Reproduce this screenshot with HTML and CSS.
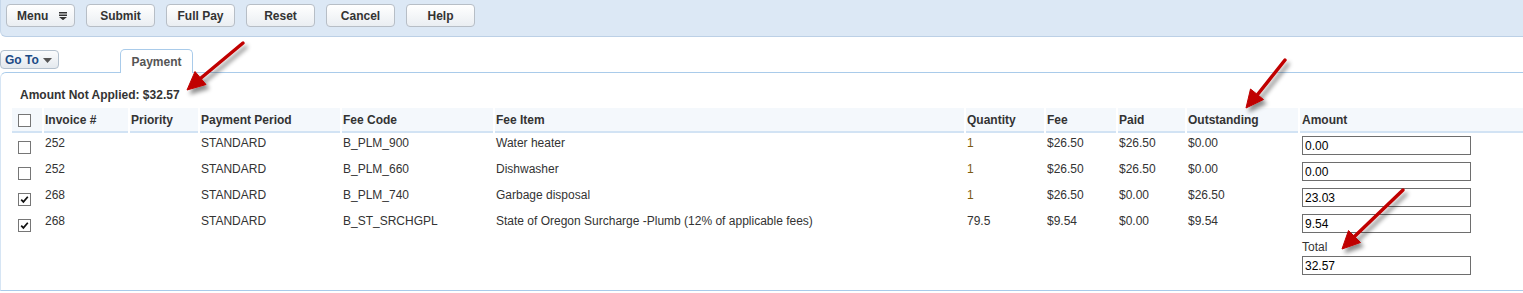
FILE: index.html
```html
<!DOCTYPE html>
<html>
<head>
<meta charset="utf-8">
<title>Payment</title>
<link rel="stylesheet" href="styles.css">
</head>
<body>
<div class="toolbar">
  <button class="btn btn-menu">Menu
    <svg class="menu-ico" width="8" height="8" viewBox="0 0 8 8"><rect x="0" y="0" width="8" height="1.5" fill="#333"/><rect x="0" y="2.5" width="8" height="1.5" fill="#333"/><polygon points="0,5 8,5 4,8.2" fill="#333"/></svg>
  </button>
  <button class="btn">Submit</button>
  <button class="btn">Full Pay</button>
  <button class="btn">Reset</button>
  <button class="btn">Cancel</button>
  <button class="btn">Help</button>
</div>

<div class="tabbar">
  <button class="goto">Go To <svg class="goto-ico" width="9" height="5" viewBox="0 0 9 5"><polygon points="0,0 9,0 4.5,5" fill="#555"/></svg></button>
  <div class="tab">Payment</div>
</div>

<div class="panel">
  <div class="summary">Amount Not Applied: $32.57</div>
  <table class="grid">
    <colgroup>
      <col class="w-chk"><col class="w-inv"><col class="w-pri"><col class="w-per"><col class="w-code"><col class="w-item"><col class="w-qty"><col class="w-fee"><col class="w-paid"><col class="w-out"><col>
    </colgroup>
    <thead>
      <tr>
        <th class="c-chk"><span class="cb"></span></th>
        <th>Invoice #</th>
        <th>Priority</th>
        <th>Payment Period</th>
        <th>Fee Code</th>
        <th>Fee Item</th>
        <th>Quantity</th>
        <th>Fee</th>
        <th>Paid</th>
        <th>Outstanding</th>
        <th class="c-amt">Amount</th>
      </tr>
    </thead>
    <tbody>
      <tr>
        <td class="c-chk"><span class="cb"></span></td>
        <td>252</td><td></td><td>STANDARD</td><td>B_PLM_900</td><td>Water heater</td>
        <td class="qty">1</td><td>$26.50</td><td>$26.50</td><td>$0.00</td>
        <td class="c-amt"><input class="amt" type="text" value="0.00"></td>
      </tr>
      <tr>
        <td class="c-chk"><span class="cb"></span></td>
        <td>252</td><td></td><td>STANDARD</td><td>B_PLM_660</td><td>Dishwasher</td>
        <td class="qty">1</td><td>$26.50</td><td>$26.50</td><td>$0.00</td>
        <td class="c-amt"><input class="amt" type="text" value="0.00"></td>
      </tr>
      <tr>
        <td class="c-chk"><span class="cb"><svg width="11" height="11" viewBox="0 0 11 11"><path d="M2.2 5.6 L4.4 7.9 L8.8 2.8" fill="none" stroke="#111" stroke-width="1.7"/></svg></span></td>
        <td>268</td><td></td><td>STANDARD</td><td>B_PLM_740</td><td>Garbage disposal</td>
        <td class="qty">1</td><td>$26.50</td><td>$0.00</td><td>$26.50</td>
        <td class="c-amt"><input class="amt" type="text" value="23.03"></td>
      </tr>
      <tr>
        <td class="c-chk"><span class="cb"><svg width="11" height="11" viewBox="0 0 11 11"><path d="M2.2 5.6 L4.4 7.9 L8.8 2.8" fill="none" stroke="#111" stroke-width="1.7"/></svg></span></td>
        <td>268</td><td></td><td>STANDARD</td><td>B_ST_SRCHGPL</td><td>State of Oregon Surcharge -Plumb (12% of applicable fees)</td>
        <td>79.5</td><td>$9.54</td><td>$0.00</td><td>$9.54</td>
        <td class="c-amt"><input class="amt" type="text" value="9.54"></td>
      </tr>
      <tr class="total-row">
        <td colspan="10"></td>
        <td class="c-amt"><div class="total-label">Total</div><input class="amt total-input" type="text" value="32.57"></td>
      </tr>
    </tbody>
  </table>
</div>

<svg class="annotations" width="1523" height="293" viewBox="0 0 1523 293">
  <defs>
    <filter id="shadow" x="-50%" y="-50%" width="200%" height="200%">
      <feDropShadow dx="3" dy="4" stdDeviation="2" flood-color="#000" flood-opacity="0.45"/>
    </filter>
  </defs>
  <g filter="url(#shadow)" fill="#c00000" stroke="#c00000">
    <line x1="243" y1="43" x2="201" y2="78" stroke-width="3.5" stroke-linecap="round"/>
    <polygon points="187,90 206,84.5 195,71.5" stroke-width="1"/>
    <line x1="1285" y1="60" x2="1258" y2="94" stroke-width="3.5" stroke-linecap="round"/>
    <polygon points="1246,108 1263.5,99.5 1250.5,89" stroke-width="1"/>
    <line x1="1403" y1="190" x2="1355" y2="236" stroke-width="3.5" stroke-linecap="round"/>
    <polygon points="1342,249 1360.5,242.5 1348.5,230.5" stroke-width="1"/>
  </g>
</svg>
</body>
</html>
```

FILE: styles.css
```css
html, body {
  margin: 0;
  padding: 0;
  background: #fff;
}
body {
  font-family: "Liberation Sans", Arial, sans-serif;
  font-size: 12px;
  line-height: 14px;
  color: #333;
  width: 1523px;
  height: 293px;
  overflow: hidden;
  position: relative;
}

/* toolbar */
.toolbar {
  display: flex;
  gap: 11px;
  height: 32px;
  padding: 4px 0 0 5px;
  background: #dce8f5;
  border-bottom: 1px solid #bcd0e6;
  border-left: 1px solid #c6d7ea;
  border-bottom-left-radius: 6px;
  box-sizing: content-box;
}
.btn {
  width: 69px;
  height: 23px;
  box-sizing: border-box;
  border: 1px solid #b7bec6;
  border-radius: 4px;
  background: linear-gradient(#ffffff, #eaeef2);
  font-family: "Liberation Sans", Arial, sans-serif;
  font-size: 12px;
  font-weight: bold;
  color: #333;
  padding: 0;
  display: flex;
  align-items: center;
  justify-content: center;
}
.btn-menu {
  justify-content: flex-start;
  padding-left: 10px;
  gap: 11px;
}
.menu-ico {
  display: block;
}

/* tab bar */
.tabbar {
  display: flex;
  align-items: flex-end;
  margin-top: 12px;
  margin-bottom: -1px;
  height: 24px;
}
.goto {
  width: 59px;
  height: 19px;
  box-sizing: border-box;
  margin-bottom: 4px;
  border: 1px solid #b3c0cd;
  border-radius: 4px;
  background: linear-gradient(#fbfcfd, #e4e9ee);
  font-family: "Liberation Sans", Arial, sans-serif;
  font-size: 12px;
  font-weight: bold;
  color: #1b4a85;
  padding: 1px 0 0 4px;
  display: flex;
  align-items: center;
  gap: 4px;
}
.goto-ico {
  display: block;
}
.tab {
  position: relative;
  z-index: 1;
  margin-left: 61px;
  width: 73px;
  height: 24px;
  box-sizing: border-box;
  border: 1px solid #a9cbea;
  border-bottom: none;
  border-radius: 5px 5px 0 0;
  background: #fff;
  text-align: center;
  font-weight: bold;
  color: #555;
  padding-top: 5px;
}

/* panel */
.panel {
  border-top: 1px solid #a9cbea;
  border-left: 1px solid #d6e5f4;
  border-bottom: 1px solid #a9cbea;
  border-top-left-radius: 6px;
  padding: 15px 0 14px 0;
  height: 188px;
  box-sizing: content-box;
}
.summary {
  font-weight: bold;
  margin-left: 19px;
  height: 14px;
  margin-bottom: 6px;
}

.grid {
  table-layout: fixed;
  border-collapse: separate;
  border-spacing: 2px 0;
  width: 1515px;
  margin-left: 9px;
}
.w-chk { width: 30px; }
.w-inv { width: 84px; }
.w-pri { width: 68px; }
.w-per { width: 140px; }
.w-code { width: 151px; }
.w-item { width: 469px; }
.w-qty { width: 78px; }
.w-fee { width: 70px; }
.w-paid { width: 67px; }
.w-out { width: 111px; }

.grid th {
  background: #f4f8fc;
  border-bottom: 2px solid #d2e3f4;
  text-align: left;
  font-weight: bold;
  padding: 5px 2px 4px 1px;
  line-height: 14px;
  white-space: nowrap;
  overflow: hidden;
}
.grid td {
  padding: 3px 2px 4px 1px;
  vertical-align: top;
  line-height: 14px;
  white-space: nowrap;
}
.grid .c-amt {
  padding-left: 2px;
}
.grid th.c-chk {
  padding: 6px 0 0 6px;
  vertical-align: top;
}
.grid td.c-chk {
  padding: 8px 0 0 6px;
}
.qty {
  color: #7d5a10;
}

.cb {
  display: block;
  width: 13px;
  height: 13px;
  box-sizing: border-box;
  border: 1px solid #767676;
  background: #fff;
}
.cb svg {
  display: block;
}

.amt {
  display: block;
  width: 169px;
  height: 19px;
  box-sizing: border-box;
  border: 1px solid #6e6e6e;
  padding: 1px 2px 0 2px;
  margin: 0;
  font-family: "Liberation Sans", Arial, sans-serif;
  font-size: 12px;
  color: #000;
  background: #fff;
}
.grid .total-row td {
  padding-top: 3px;
  padding-bottom: 0;
}
.total-label {
  height: 14px;
}
.total-input {
  margin-top: 2px;
}

.annotations {
  position: absolute;
  left: 0;
  top: 0;
  pointer-events: none;
}
```
